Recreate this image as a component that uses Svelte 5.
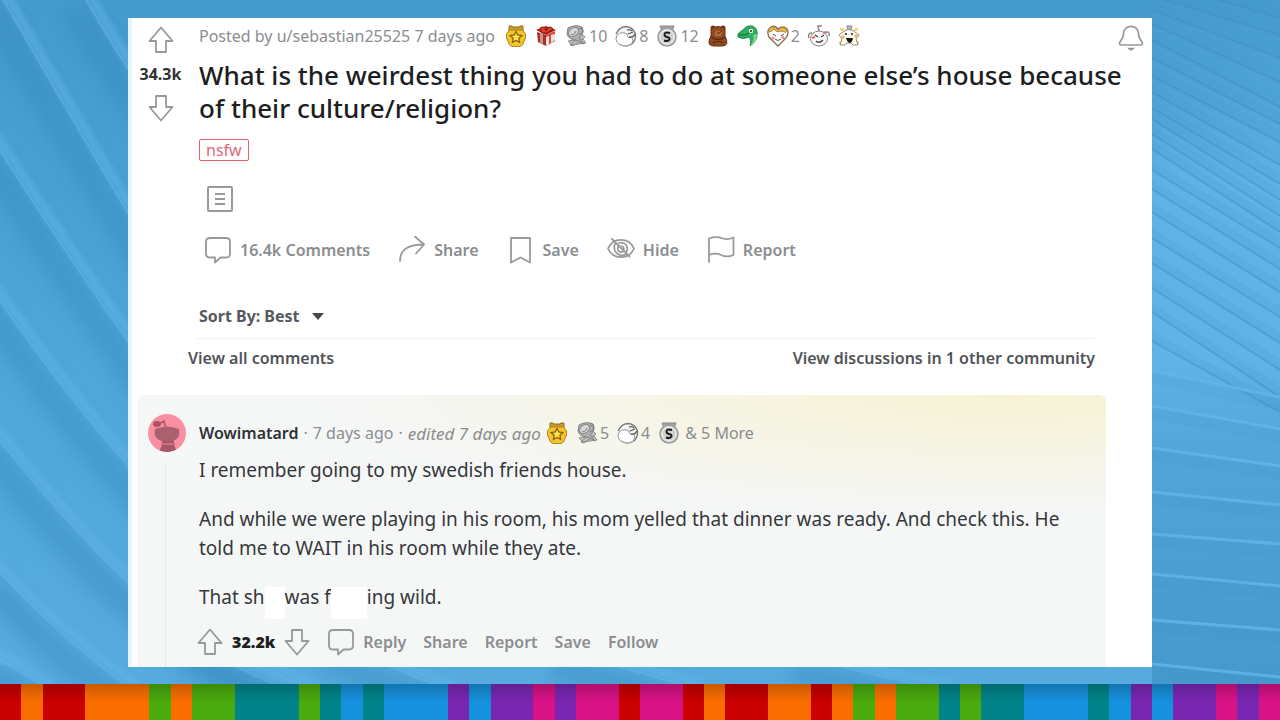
<script lang="ts">
    type Award = { kind: string; count?: number };

    const postAwards: Award[] = [
        { kind: 'star' },
        { kind: 'gift' },
        { kind: 'scroll', count: 10 },
        { kind: 'facepalm', count: 8 },
        { kind: 'silver', count: 12 },
        { kind: 'bear' },
        { kind: 'dragon' },
        { kind: 'heart', count: 2 },
        { kind: 'snoo' },
        { kind: 'party' }
    ];
    const commentAwards: Award[] = [
        { kind: 'star' },
        { kind: 'scroll', count: 5 },
        { kind: 'facepalm', count: 4 },
        { kind: 'silver' }
    ];
    const postActions = [
        { icon: 'comment', label: '16.4k Comments' },
        { icon: 'share', label: 'Share' },
        { icon: 'save', label: 'Save' },
        { icon: 'hide', label: 'Hide' },
        { icon: 'report', label: 'Report' }
    ];
    const commentActions = ['Share', 'Report', 'Save', 'Follow'];

    // colour and number of units for each stripe
    const stripes: [string, number][] = [
        ['red', 1], ['orange', 1], ['red', 2], ['orange', 3], ['green', 1], ['orange', 1],
        ['green', 2], ['teal', 3], ['green', 1], ['teal', 1], ['blue', 1], ['teal', 1],
        ['blue', 3], ['purple', 1], ['blue', 1], ['purple', 2], ['pink', 1], ['purple', 1],
        ['pink', 2], ['red', 1], ['pink', 2], ['red', 1], ['orange', 1], ['red', 2],
        ['orange', 2], ['red', 1], ['orange', 1], ['green', 1], ['orange', 1], ['green', 2],
        ['teal', 1], ['green', 1], ['teal', 2], ['blue', 3], ['teal', 1], ['blue', 1],
        ['purple', 1], ['blue', 1], ['purple', 2], ['pink', 1], ['purple', 1], ['pink', 1]
    ];

    const ridges = [
        'M82 -8 Q104 32 134 78 T260 190',
        'M0 -6 Q62 102 128 213 T280 400',
        'M-6 141 Q62 248 134 350 T300 520',
        'M-6 292 Q67 398 134 472 T330 620',
        'M-6 433 Q67 526 134 588 T340 700',
        'M-6 566 Q67 645 134 690',
        'M-6 656 Q20 672 50 690',
        'M190 640 Q240 672 290 690',
        'M330 640 Q400 672 450 690',
        'M560 650 Q640 672 700 690',
        'M800 655 Q870 676 950 690'
    ];
    const darkLines = [
        [-20, 18], [-4, 35], [10, 58], [24, 82], [40, 107], [58, 124], [76, 142], [92, 165],
        [108, 184], [119, 200], [134, 216], [149, 232], [170, 248], [189, 269], [212, 292],
        [238, 317], [263, 343], [288, 370], [312, 397], [341, 412]
    ];
    const lightLines = [[371, 397], [406, 429], [448, 466], [492, 505], [534, 544], [574, 586], [620, 630], [664, 677]];

    let sort = $state('Best');
</script>

{#snippet arrow(dir: string)}
    <svg class="arrow" class:down={dir === 'down'} viewBox="0 0 26 28" aria-hidden="true">
        <path d="M13 1.500 L24.500 15 H18 V26 H8 V15 H1.500 Z" />
    </svg>
{/snippet}

{#snippet icon(name: string)}
    <svg class="icon" viewBox="0 0 28 28" aria-hidden="true">
        {#if name === 'comment'}
            <path d="M6 2 H22 Q26 2 26 6 V17.500 Q26 21.500 22 21.500 H16.500 L11 26.500 V21.500 H6 Q2 21.500 2 17.500 V6 Q2 2 6 2 Z" />
        {:else if name === 'share'}
            <path d="M2 25 C2 14 9 8.500 26 8.500 M17 0.500 L26 8.500 L18 17.500" />
        {:else if name === 'save'}
            <path d="M4 2 H23 V26.500 L13.500 21.500 L4 26.500 Z" />
        {:else if name === 'hide'}
            <path d="M1 12.500 C6 1 22 1 27 12.500 C22 24 6 24 1 12.500 Z M5 3 L22.500 20.500 M8 8 C5 16 13 22 19 18 M12 7 C18 5 22 11 19.500 15.500 M11 11 C10 15 13 17 16 15.500 M15 10 Q17 11 17 13.500" />
        {:else if name === 'report'}
            <path d="M2 26 V2.500 C8 0 12 1 16 2.500 C20 4 23 3 26.500 1.500 V19 C22 21 18 21 14 19 C10 17 6 17.500 2 19" />
        {/if}
    </svg>
{/snippet}

{#snippet badge(kind: string)}
    <svg class="badge" viewBox="0 0 22 22" aria-hidden="true">
        {#if kind === 'star'}
            <path d="M4 1 H7 L8 2 H14 L15 1 H18 V6 H4 Z" fill="#c99a20" stroke="#8c7023" />
            <path d="M4.500 5 H17.500 L20.500 9 V13 L17.500 20 L15 21.500 H7 L4.500 20 L1.500 13 V9 Z" fill="#f3c52c" stroke="#b38a1a" />
            <path d="M11 6.500 L12.800 10 L16.800 10.600 L13.900 13.300 L14.600 17.300 L11 15.400 L7.400 17.300 L8.100 13.300 L5.200 10.600 L9.200 10 Z" fill="#ffe14a" stroke="#86600f" stroke-width="1.300" />
        {:else if kind === 'gift'}
            <path d="M2 7 L11 10 V21 L3 17 Z" fill="#a73124" />
            <path d="M11 10 L20 6 V16 L11 21 Z" fill="#dc4b37" />
            <path d="M1 5 L11 1 L21 5 L11 10 Z" fill="#b32018" />
            <path d="M5 3 Q10 0 11 6 Q15 -1 18 4 L12 8 L7 8 Z" fill="#e33e29" stroke="#7e1d17" />
            <path d="M5 8 L8 9 V19 L5 18 Z" fill="#c9948c" />
            <path d="M11 12 L14 11 V19 L11 21 Z M16 10 L20 9 V15 L16 18 Z" fill="#e4e2e4" />
        {:else if kind === 'scroll'}
            <path d="M3 16 L18 14 L21 18 L7 20 Z M5 20 L17 9 L20 12 L8 21 Z" fill="#c0c0c0" stroke="#8d8d8d" />
            <path d="M3 3 Q10 -1 17 2 Q20 8 14 13 L19 19 L11 15 Q4 15 2 9 Z" fill="#b0b0b0" stroke="#808080" />
            <ellipse cx="8.500" cy="7" rx="5.500" ry="4" fill="#d8d8d8" stroke="#858585" transform="rotate(-38 8.500 7)" />
            <path d="M6 9 Q9 11 11 6 M14 4 L17 3 L18 7 L14 10" fill="none" stroke="#777" />
        {:else if kind === 'facepalm'}
            <path d="M1 15 Q-1 6 7 2 Q15 -1 20 6 Q23 15 16 20 Q6 22 1 15 Z" fill="#f3f3f3" />
            <path d="M1 9 Q4 2 11 1.500 Q18 2 20.500 9 Q21 15 17 19" fill="none" stroke="#777" stroke-width="1.300" />
            <path d="M2 10 Q7 6 12 9 Q12 14 17 12 Q20 20 11 21 Q2 21 1 14 Z" fill="#fff" stroke="#999" />
            <path d="M12 5 Q15 4 17 6 M13 9 L18 7 M14 12 Q18 13 20 9" fill="none" stroke="#555" stroke-width="1.300" />
            <path d="M4 19 Q10 23 17 19" fill="none" stroke="#aaa" stroke-width="1.500" />
        {:else if kind === 'silver'}
            <path d="M4 1 H18 L16 6 H6 Z" fill="#a8a8a8" stroke="#858585" />
            <circle cx="11" cy="12" r="9" fill="#d9d9d9" stroke="#999" stroke-width="1.500" />
            <circle cx="11" cy="12" r="6.800" fill="#cfcfcf" stroke="#eee" />
            <path d="M14 8 Q8.500 6.500 8.500 9.500 Q8.500 11.500 11 12 Q14 12.500 13.500 14.500 Q12 17 8 15.500" fill="none" stroke="#1a1a1a" stroke-width="1.900" />
        {:else if kind === 'bear'}
            <circle cx="6" cy="3" r="2.500" fill="#743712" />
            <circle cx="16" cy="3" r="2.500" fill="#743712" />
            <path d="M4 4 Q11 -1 18 4 L18 11 Q23 21 15 21 H6 Q-1 20 4 11 Z" fill="#8f4a20" stroke="#64331a" />
            <path d="M7 7 Q11 4 15 7 L14 11 H8 Z" fill="#b26b38" />
            <path d="M7 7 h1 M13 7 h1 M10 8 h3 M4 12 Q11 17 18 12 M6 18 Q11 15 16 18" fill="none" stroke="#52240f" stroke-width="1.200" />
        {:else if kind === 'dragon'}
            <path d="M1 9 Q4 6 7 4 Q10 0 15 1 Q21 3 20 10 Q20 16 13 21 Q15 15 12 12 Q6 15 1 12 Z" fill="#2fae5e" stroke="#1f8549" />
            <path d="M16 10 Q18 15 13 21 Q20 18 20 9 Z" fill="#7bd68a" />
            <circle cx="14" cy="6" r="2.200" fill="#effae7" />
            <circle cx="14" cy="6" r="1" fill="#16331f" />
            <path d="M2 10 Q8 11 12 8" fill="none" stroke="#11642e" />
        {:else if kind === 'heart'}
            <path d="M11 21 L2 12 Q-1 5 4 2 Q8 0 11 4 Q16 0 20 4 Q23 9 17 15 Z" fill="#fff" stroke="#8b7356" stroke-width="1.400" />
            <path d="M2 7 Q1 2 6 2 Q9 2 11 5 Q16 0 20 5 Q20 9 15 6 Q9 8 7 4 Q5 7 2 7 Z" fill="#e3b550" stroke="#b08738" />
            <path d="M6 9 L9 11 M14 11 L17 9 M8 14 Q11 17 14 14" fill="none" stroke="#57433b" />
            <circle cx="6" cy="13" r="1.500" fill="#ee8880" />
            <circle cx="16" cy="12.500" r="1.500" fill="#ee8880" />
        {:else if kind === 'snoo'}
            <path d="M11 6 L10 1 H14" fill="none" stroke="#888" stroke-width="1.500" />
            <ellipse cx="11" cy="13.500" rx="8.500" ry="7.500" fill="#fafafa" stroke="#857f82" />
            <path d="M4 8 Q-1 8 1 13 M17 8 Q22 5 21 11" fill="none" stroke="#857f82" stroke-width="1.400" />
            <path d="M7 10 l3 2 M13 12 l3 -2 M8 16 Q11 19 15 15" fill="none" stroke="#444" stroke-width="1.300" />
            <path d="M4 13 l3 -1 M15 8 l3 -1" stroke="#e8686c" stroke-width="2.200" />
        {:else}
            <path d="M2 4 L6 5 M20 4 L16 5 M1 18 L5 16 M21 18 L17 16" stroke="#f0cf80" stroke-width="2.500" />
            <path d="M9 1 H14 L13 5 H10 Z" fill="#bbb" stroke="#888" />
            <path d="M5 7 Q11 2 17 7 L21 10 L18 14 L20 20 H15 L13 18 H9 L7 20 H2 L4 14 L1 10 Z" fill="#fffaf0" stroke="#998f80" />
            <path d="M8 8 v2 M14 8 v2" stroke="#444" stroke-width="1.800" />
            <path d="M8 13 H15 Q14 18 11.500 18 Q9 17 8 13" fill="#191919" />
            <circle cx="5" cy="12" r="1.800" fill="#f2b65c" />
            <circle cx="18" cy="11" r="1.800" fill="#f2b65c" />
        {/if}
    </svg>
{/snippet}

{#snippet awards(list: Award[])}
    <span class="awards">
        {#each list as award}
            <span class="award">
                {@render badge(award.kind)}
                {#if award.count}<span>{award.count}</span>{/if}
            </span>
        {/each}
    </span>
{/snippet}

<div class="page">
    <svg class="backdrop" viewBox="0 0 1280 720" preserveAspectRatio="none" aria-hidden="true">
        <defs>
            <linearGradient id="sky" x1="0" y1="0" x2="0" y2="1">
                <stop offset="0" stop-color="#449acb" />
                <stop offset=".5" stop-color="#4ea6d9" />
                <stop offset="1" stop-color="#58abe0" />
            </linearGradient>
            <linearGradient id="side" x1="0" y1="0" x2="0" y2="1">
                <stop offset="0" stop-color="#469bcd" />
                <stop offset=".14" stop-color="#4fa4d8" />
                <stop offset=".25" stop-color="#5fb2e6" />
                <stop offset=".5" stop-color="#60b3e7" />
                <stop offset=".63" stop-color="#52a5d8" />
                <stop offset="1" stop-color="#4596c9" />
            </linearGradient>
            <filter id="soft" x="-20%" y="-20%" width="140%" height="140%"><feGaussianBlur stdDeviation="10" /></filter>
            <filter id="edge"><feGaussianBlur stdDeviation="2" /></filter>
        </defs>
        <rect width="1280" height="720" fill="url(#sky)" />
        {#each ridges as d}
            <path {d} class="shade" transform="translate(-8 16)" filter="url(#soft)" />
            <path {d} class="ridge" transform="translate(3 -5)" filter="url(#edge)" />
            <path {d} class="crest" />
        {/each}
        <rect x="1152" width="128" height="720" fill="url(#side)" />
        {#each darkLines as [a, b]}
            <path d="M1152 {a} L1280 {b} v-11 L1152 {a - 9} Z" class="fold" />
            <path d="M1152 {a} L1280 {b}" class="dark" />
        {/each}
        {#each lightLines as [a, b]}
            <path d="M1152 {a} L1280 {b} v14 L1152 {a + 13} Z" class="fold" />
            <path d="M1152 {a} L1280 {b}" class="light" />
        {/each}
    </svg>

    <main class="card">
        <article class="post">
            <div class="votes">
                <button aria-label="Upvote">{@render arrow('up')}</button>
                <strong>34.3k</strong>
                <button aria-label="Downvote">{@render arrow('down')}</button>
            </div>
            <div class="content">
                <header class="meta">
                    <span>Posted by <a href="#user">u/sebastian25525</a> 7 days ago</span>
                    {@render awards(postAwards)}
                    <button class="bell" aria-label="Notifications">
                        <svg viewBox="0 0 28 28" aria-hidden="true">
                            <path d="M3 21.500 Q1 21 2 18.500 C5 15 6 13 6 9 C6 -1 22 -1 22 9 C22 13 23 15 26 18.500 Q27 21 25 21.500 Z" />
                            <path d="M12 25.500 H16 Q14 27.500 12 25.500 Z" />
                        </svg>
                    </button>
                </header>
                <h1>What is the weirdest thing you had to do at someone else’s house because of their culture/religion?</h1>
                <span class="tag">nsfw</span>
                <svg class="text-icon" viewBox="0 0 26 26" aria-hidden="true">
                    <rect x="1" y="1" width="24" height="24" rx="1" />
                    <path d="M8 8 H18 M8 13 H18 M8 18 H18" />
                </svg>
                <div class="actions">
                    {#each postActions as action}
                        <button>{@render icon(action.icon)}{action.label}</button>
                    {/each}
                </div>
                <div class="sort">
                    <label for="sort">Sort By:</label>
                    <select id="sort" bind:value={sort}>
                        <option>Best</option>
                        <option>Top</option>
                        <option>New</option>
                    </select>
                    <svg viewBox="0 0 12 7" aria-hidden="true"><path d="M0 0 H12 L6 7 Z" /></svg>
                </div>
            </div>
        </article>

        <nav class="links">
            <a href="#comments">View all comments</a>
            <a href="#discussions">View discussions in 1 other community</a>
        </nav>

        <section class="comment">
            <div class="rail">
                <svg class="avatar" viewBox="0 0 38 38" aria-hidden="true">
                    <clipPath id="round"><circle cx="19" cy="19" r="19" /></clipPath>
                    <g clip-path="url(#round)">
                        <rect width="38" height="38" fill="#fb8fa2" />
                        <ellipse cx="9" cy="10" rx="4" ry="3" fill="#a95566" />
                        <path d="M11 10 L16 7 L18 15" fill="none" stroke="#a95566" stroke-width="1.500" />
                        <path d="M7 15 Q19 10 31 15 Q33 24 25 27 H13 Q5 24 7 15 Z" fill="#a9606f" />
                        <path d="M14 27 H26 V31 L29 38 H11 L14 31 Z" fill="#a55868" />
                        <path d="M13 30 H27" stroke="#cf7183" stroke-width="2" />
                    </g>
                </svg>
            </div>
            <div class="body">
                <header class="byline">
                    <a class="author" href="#author">Wowimatard</a>
                    <span>·</span>
                    <span>7 days ago</span>
                    <span>·</span>
                    <em>edited 7 days ago</em>
                    {@render awards(commentAwards)}
                    <span>&amp; 5 More</span>
                </header>
                <p>I remember going to my swedish friends house.</p>
                <p>And while we were playing in his room, his mom yelled that dinner was ready. And check this. He told me to WAIT in his room while they ate.</p>
                <p>That sh<span class="gap"></span>was f<span class="gap wide"></span>ing wild.</p>
                <div class="replies">
                    <button aria-label="Upvote">{@render arrow('up')}</button>
                    <strong>32.2k</strong>
                    <button aria-label="Downvote">{@render arrow('down')}</button>
                    <button>{@render icon('comment')}Reply</button>
                    {#each commentActions as label}
                        <button>{label}</button>
                    {/each}
                </div>
            </div>
        </section>
    </main>

    <footer class="stripes">
        {#each stripes as [colour, size]}
            <span class={colour} style="flex-grow: {size}"></span>
        {/each}
    </footer>
</div>

<style>
    :global(body) {
        background: #4ea6d9;
    }

    .page {
        position: relative;
        display: flex;
        flex-direction: column;
        min-height: 100vh;
        font-family: "Noto Sans", "Open Sans", sans-serif;
        font-size: 16px;
        color: #8b8d8f;
    }

    .backdrop {
        position: absolute;
        width: 100%;
        height: 100%;
    }
    .shade {
        fill: none;
        stroke: #2f83b6;
        stroke-width: 26;
        opacity: 0.4;
    }
    .ridge {
        fill: none;
        stroke: #62b5ea;
        stroke-width: 10;
        opacity: 0.5;
    }
    .crest {
        fill: none;
        stroke: #68baec;
        stroke-width: 2;
        opacity: 0.4;
    }
    .fold {
        fill: #3f92c6;
        opacity: 0.15;
    }
    .dark {
        fill: none;
        stroke: #3d8fc2;
        stroke-width: 2;
        opacity: 0.45;
    }
    .light {
        fill: none;
        stroke: #64b5e9;
        stroke-width: 3;
        opacity: 0.8;
    }

    .card {
        position: relative;
        box-sizing: border-box;
        width: 80%;
        margin: 18px auto 16px;
        background: #fff;
        border-left: 4px solid #e8f4fb;
    }

    button {
        display: flex;
        align-items: center;
        gap: 8px;
        padding: 0;
        border: 0;
        background: none;
        font: inherit;
        color: inherit;
        cursor: pointer;
    }
    a {
        color: inherit;
        text-decoration: none;
    }
    svg {
        flex: none;
    }

    .arrow {
        width: 26px;
        height: 28px;
        fill: none;
        stroke: #97999b;
        stroke-width: 1.8;
        stroke-linejoin: round;
    }
    .down {
        transform: rotate(180deg);
    }
    .icon {
        width: 28px;
        height: 28px;
        fill: none;
        stroke: #97999b;
        stroke-width: 1.8;
        stroke-linecap: round;
        stroke-linejoin: round;
    }
    .badge {
        width: 22px;
        height: 22px;
    }

    .post {
        display: grid;
        grid-template-columns: 67px 1fr;
    }
    .votes {
        display: flex;
        flex-direction: column;
        align-items: center;
        gap: 8px;
        padding: 8px 10px 0 0;
    }
    .votes strong {
        font-size: 16px;
        line-height: 24px;
        color: #303336;
    }
    .content {
        padding-top: 5px;
    }
    .meta {
        display: flex;
        align-items: center;
        gap: 10px;
        height: 26px;
        padding-right: 8px;
    }
    .awards {
        display: flex;
        align-items: center;
        gap: 8px;
    }
    .award {
        display: flex;
        align-items: center;
        gap: 2px;
    }
    .bell {
        margin-left: auto;
        padding-top: 4px;
    }
    .bell svg {
        width: 26px;
        height: 28px;
        fill: none;
        stroke: #97999b;
        stroke-width: 1.8;
    }
    h1 {
        margin: 10px 20px 14px 0;
        font-size: 26px;
        line-height: 33px;
        font-weight: 500;
        color: #1c1e22;
    }
    .tag {
        display: block;
        box-sizing: border-box;
        width: fit-content;
        padding: 0 6px;
        border: 1px solid #e2626c;
        border-radius: 2px;
        line-height: 20px;
        color: #de6a76;
    }
    .text-icon {
        display: block;
        width: 26px;
        height: 26px;
        margin: 25px 0 23px 8px;
        fill: none;
        stroke: #97999b;
        stroke-width: 2;
    }
    .actions {
        display: flex;
        gap: 28px;
        height: 30px;
        padding-left: 5px;
        font-weight: 600;
    }
    .sort {
        display: flex;
        align-items: center;
        gap: 4px;
        height: 24px;
        margin: 39px 57px 0 -2px;
        padding: 0 0 10px 2px;
        border-bottom: 1px solid #edeff1;
        font-weight: 700;
        color: #55595d;
    }
    .sort select {
        field-sizing: content;
        appearance: none;
        padding: 0;
        border: 0;
        background: none;
        font: inherit;
        color: inherit;
    }
    .sort svg {
        width: 12px;
        height: 7px;
        margin-left: 8px;
        fill: #45484d;
    }
    .links {
        display: flex;
        justify-content: space-between;
        margin: 7px 57px 25px 56px;
        line-height: 24px;
        font-weight: 600;
        color: #505458;
    }

    .comment {
        display: grid;
        grid-template-columns: 61px 1fr;
        margin: 0 46px 0 6px;
        padding: 19px 30px 10px 0;
        border-radius: 6px 6px 0 0;
        background: radial-gradient(ellipse 72% 120px at 90% 0, #f7f2d4, #f7f2d400), #f5f7f7;
    }
    .rail {
        display: flex;
        flex-direction: column;
        gap: 10px;
        margin-bottom: -10px;
        padding-left: 10px;
    }
    .rail::after {
        content: "";
        flex: 1;
        margin-left: 17px;
        border-left: 1px solid #e4e7e9;
    }
    .avatar {
        width: 38px;
        height: 38px;
    }
    .byline {
        display: flex;
        align-items: center;
        gap: 5px;
        height: 38px;
        margin-bottom: 4px;
    }
    .author {
        font-weight: 600;
        color: #303336;
    }
    .byline em {
        font-size: 17px;
    }
    p {
        margin: 0 0 20px;
        font-size: 19px;
        line-height: 29px;
        color: #36383b;
    }
    .gap {
        display: inline-block;
        width: 20px;
        height: 32px;
        margin: -12px 0;
        vertical-align: -3px;
        background: #fff;
    }
    .wide {
        width: 36px;
    }
    .replies {
        display: flex;
        align-items: center;
        gap: 17px;
        height: 30px;
        margin: -5px 0 0 -2px;
        font-weight: 600;
    }
    .replies strong {
        margin: 0 -8px;
        color: #1c1e22;
    }

    .stripes {
        position: relative;
        display: flex;
        height: 36px;
        margin-top: auto;
    }
    .stripes span {
        flex-basis: 0;
        background-image: linear-gradient(#00000030, #0000 50%);
    }
    .red { background-color: #c80000; }
    .orange { background-color: #fa6e00; }
    .green { background-color: #4aab0e; }
    .teal { background-color: #008489; }
    .blue { background-color: #1691dd; }
    .purple { background-color: #7927b3; }
    .pink { background-color: #d81285; }
</style>
